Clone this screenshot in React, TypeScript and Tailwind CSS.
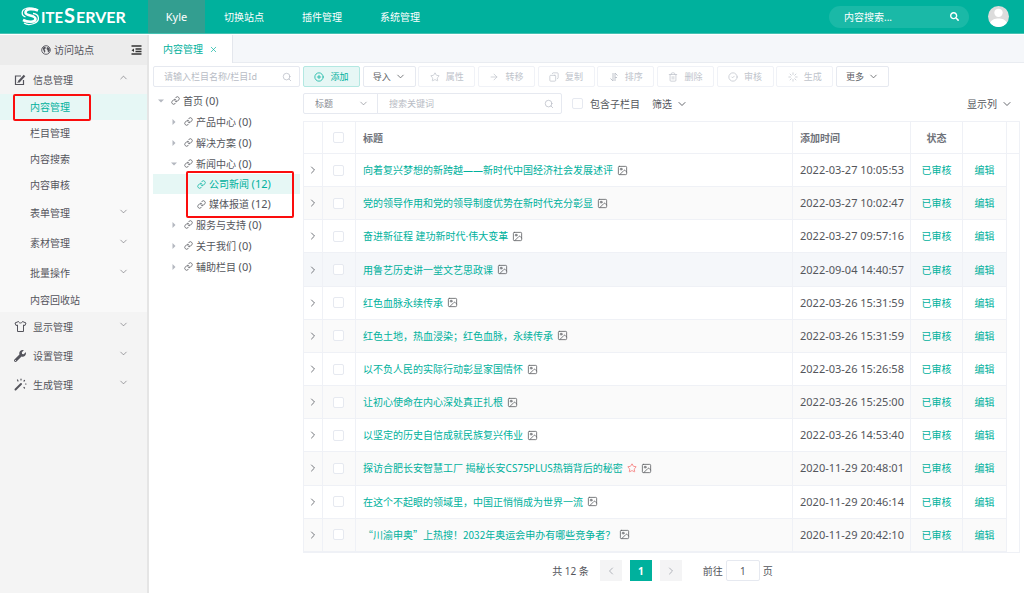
import { useState } from 'react';
import {
  Image,
  ChevronDown,
  ChevronLeft,
  ChevronRight,
  ChevronUp,
  CircleCheck,
  CirclePlus,
  Copy,
  Link,
  ArrowRight,
  Loader,
  Search,
  Star,
  Trash2,
  X,
} from 'lucide-react';
import { FaSearch, FaWrench } from 'react-icons/fa';

const TOP_NAV = ['切换站点', '插件管理', '系统管理'];

const SUB_MENU = ['内容管理', '栏目管理', '内容搜索', '内容审核'];
const SUB_GROUPS = ['表单管理', '素材管理', '批量操作'];

const GROUPS = [
  { name: '显示管理', icon: <ShirtIcon /> },
  { name: '设置管理', icon: <FaWrench size={12} /> },
  { name: '生成管理', icon: <WandIcon /> },
];

const ACTIONS = [
  { name: '属性', icon: <Star size={10} strokeWidth={1.8} /> },
  { name: '转移', icon: <ArrowRight size={10} strokeWidth={1.8} /> },
  { name: '复制', icon: <Copy size={10} strokeWidth={1.8} className="-scale-x-100" /> },
  { name: '排序', icon: <SortIcon /> },
  { name: '删除', icon: <Trash2 size={10} strokeWidth={1.8} /> },
  { name: '审核', icon: <CircleCheck size={10} strokeWidth={1.8} /> },
  { name: '生成', icon: <Loader size={10} strokeWidth={1.8} /> },
];

const CONTENTS = [
  { title: '向着复兴梦想的新跨越——新时代中国经济社会发展述评', date: '2022-03-27 10:05:53' },
  { title: '党的领导作用和党的领导制度优势在新时代充分彰显', date: '2022-03-27 10:02:47' },
  { title: '奋进新征程 建功新时代·伟大变革', date: '2022-03-27 09:57:16' },
  { title: '用鲁艺历史讲一堂文艺思政课', date: '2022-09-04 14:40:57', active: true },
  { title: '红色血脉永续传承', date: '2022-03-26 15:31:59' },
  { title: '红色土地，热血浸染；红色血脉，永续传承', date: '2022-03-26 15:31:59' },
  { title: '以不负人民的实际行动彰显家国情怀', date: '2022-03-26 15:26:58' },
  { title: '让初心使命在内心深处真正扎根', date: '2022-03-26 15:25:00' },
  { title: '以坚定的历史自信成就民族复兴伟业', date: '2022-03-26 14:53:40' },
  { title: '探访合肥长安智慧工厂 揭秘长安CS75PLUS热销背后的秘密', date: '2020-11-29 20:48:01', star: true },
  { title: '在这个不起眼的领域里，中国正悄悄成为世界一流', date: '2020-11-29 20:46:14' },
  { title: '“川渝申奥”上热搜！2032年奥运会申办有哪些竞争者？', date: '2020-11-29 20:42:10', quoted: true },
];

function ShirtIcon() {
  return (
    <svg viewBox="0 0 13 13" className="size-[13px]" fill="none" stroke="currentColor" strokeLinejoin="round">
      <path d="M4.500 1.500L1 3L2 5.500L3.500 5V11.500H9.500V5L11 5.500L12 3L8.500 1.500C8 3.500 5 3.500 4.500 1.500Z" />
    </svg>
  );
}

function WandIcon() {
  return (
    <svg viewBox="0 0 13 13" className="size-[13px]" fill="none" stroke="currentColor" strokeLinecap="round">
      <path d="M1.500 11.500L7 6" strokeWidth="2" />
      <path d="M7 1V2M3.500 2L4 3M10.500 2.500L10 3M11.500 6H12M10 9.500L10.500 10" strokeWidth="1.200" />
    </svg>
  );
}

function EditIcon() {
  return (
    <svg viewBox="0 0 12 12" className="mr-[7px] size-3" fill="none" stroke="currentColor">
      <path d="M7 2H1.500V10.500H9.500V6" strokeWidth="1.200" />
      <path d="M4.500 8L10.500 1.500" strokeWidth="2.200" />
      <path d="M3.500 9L5 7.500" />
    </svg>
  );
}

function SortIcon() {
  return (
    <svg viewBox="0 0 10 10" className="size-[10px]" fill="none" stroke="currentColor">
      <path d="M4 1V9L1.500 6.500M6 9V1L8.500 3.500M6 5.500H8" />
    </svg>
  );
}

function EarthIcon() {
  return (
    <svg viewBox="0 0 10 10" className="size-[10px]">
      <circle cx="5" cy="5" r="4.300" fill="none" stroke="currentColor" strokeWidth="0.900" />
      <path d="M1.500 3L4 1.500L5 3L3.500 4.500L4.500 6L3.500 8L2.500 5.500ZM6 2L8.500 3L8.800 6L7 7.500L6.500 5L5.500 4Z" fill="currentColor" />
    </svg>
  );
}

function Logo() {
  return (
    <a href="#" aria-label="SiteServer" className="flex w-[148px] items-center pl-[21px] text-white">
      <svg viewBox="0 0 110 30" className="h-[30px] w-[110px]" fill="currentColor">
        <path
          d="M17 8.500C12 6.500 4.500 6.500 4.500 10.500C4.500 14.500 14.500 12.500 14.500 17C14.500 20.500 7 20.500 2 18"
          fill="none"
          stroke="currentColor"
          strokeWidth="2.600"
        />
        <path
          d="M4.500 15C0 13.500 0 8 5 6.500C8 5.500 12 6 17 8M12 11.500C18.500 12 19.500 19 13 21.500C9 23 5 22.500 3 21"
          fill="none"
          stroke="currentColor"
          strokeWidth="1.300"
        />
        <g fontFamily="Lato, sans-serif" fontWeight="700">
          <text x="20" y="21" fontSize="15">ITE</text>
          <text x="43" y="21" fontSize="20">S</text>
          <text x="55" y="21" fontSize="16">ERVER</text>
        </g>
      </svg>
    </a>
  );
}

function Header() {
  return (
    <header className="flex h-[34px] shrink-0 items-stretch border-b border-[#46c2b3] bg-[#00b19d] text-white">
      <Logo />
      <nav className="flex">
        <a href="#" className="flex w-[57px] items-center justify-center bg-[#339e90] text-[11px]">Kyle</a>
        {TOP_NAV.map((item) => (
          <a key={item} href="#" className="flex w-[78px] items-center justify-center">{item}</a>
        ))}
      </nav>
      <div className="ml-auto flex items-center gap-[19px] pr-[15px]">
        <label className="flex h-[22px] w-[140px] items-center rounded-full bg-[#1ab9a7] pl-[15px] pr-[10px]">
          <input
            aria-label="内容搜索"
            placeholder="内容搜索..."
            className="min-w-0 flex-1 bg-transparent outline-none placeholder:text-white"
          />
          <FaSearch size={9} />
        </label>
        <svg viewBox="0 0 20 20" className="size-[21px]" role="img" aria-label="Kyle">
          <circle cx="10" cy="10" r="10" fill="#dcdcdc" />
          <circle cx="10" cy="6.500" r="4" fill="#fff" />
          <path d="M2 16C4 10.500 16 10.500 18 16A10 10 0 0 1 2 16Z" fill="#fff" />
        </svg>
      </div>
    </header>
  );
}

function Sidebar() {
  return (
    <aside className="w-[149px] shrink-0 border-r-2 border-[#e5e5e5] bg-[#f4f4f4] text-[#54545c]">
      <div className="flex h-[30px] items-center bg-[#ececec] pl-[41px] pr-[5px]">
        <a href="#" className="flex items-center gap-[3px]"><EarthIcon />访问站点</a>
        <button aria-label="收起菜单" className="ml-auto">
          <svg viewBox="0 0 11 10" className="h-[10px] w-[11px]" stroke="#333" strokeWidth="1.400">
            <path d="M0.500 1H10.500M4.500 4H10.500M4.500 6.500H10.500M0.500 9H10.500" />
            <path d="M0.500 5.200L3 3.500V7Z" fill="#333" stroke="none" />
          </svg>
        </button>
      </div>
      <button className="flex h-[29px] w-full items-center pl-[14px] pr-[18px]">
        <EditIcon />信息管理
        <ChevronUp size={11} strokeWidth={1.2} className="mb-1 ml-auto" />
      </button>
      <div className="bg-[#f9f9f9]">
        {SUB_MENU.map((item, i) => (
          <div key={item} className="relative">
            <a
              href="#"
              className={`flex h-[26px] items-center pl-[30px] ${i === 0 ? 'bg-[#e6f7f5] text-[#00b19d]' : ''}`}
            >
              {item}
            </a>
            {i === 0 && <span className="absolute left-[13px] top-0 h-[27px] w-[78px] rounded-xs border-2 border-[#fb0d0d]" />}
          </div>
        ))}
        {SUB_GROUPS.map((item) => (
          <button key={item} className="flex h-[30px] w-full items-center pl-[30px] pr-[18px]">
            {item}
            <ChevronDown size={11} strokeWidth={1.2} className="mb-1 ml-auto" />
          </button>
        ))}
        <a href="#" className="flex h-6 items-center pl-[30px]">内容回收站</a>
      </div>
      {GROUPS.map((group) => (
        <button key={group.name} className="flex h-[29px] w-full items-center pl-[14px] pr-[18px]">
          <span className="w-[19px]">{group.icon}</span>{group.name}
          <ChevronDown size={11} strokeWidth={1.2} className="mb-1 ml-auto" />
        </button>
      ))}
    </aside>
  );
}

interface TreeNodeProps {
  name: string;
  count: number;
  depth?: number;
  open?: boolean;
  leaf?: boolean;
  active?: boolean;
}

function TreeNode({ name, count, depth = 0, open, leaf, active }: TreeNodeProps) {
  return (
    <button
      className={`flex w-full items-center ${leaf ? 'h-5' : 'h-[21px]'} ${['pl-1', 'pl-[17px]', 'pl-[30px]'][depth]} ${
        active ? 'bg-[#e6f7f5] text-[#00b19d]' : 'text-[#54565c]'
      }`}
    >
      <svg viewBox="0 0 8 8" className="mr-[6px] size-2" fill="#b4b8c0">
        {!leaf && <path d={open ? 'M1 2.500H7L4 5.500Z' : 'M2.500 1L5.500 4L2.500 7Z'} />}
      </svg>
      <Link size={9} strokeWidth={2} className="mr-[3px]" />
      {name}&nbsp;<span className="text-[11px]">({count})</span>
    </button>
  );
}

function ChannelTree() {
  return (
    <div className="w-[147px] shrink-0 pt-[3px]">
      <label className="flex h-[21px] items-center rounded-xs border border-[#e6e9f0] pl-[10px] pr-[7px] text-[#b8bcc5]">
        <input
          aria-label="栏目"
          placeholder="请输入栏目名称/栏目Id"
          className="min-w-0 flex-1 text-[9px] outline-none placeholder:text-[#b8bcc5]"
        />
        <Search size={10} strokeWidth={1.8} />
      </label>
      <div className="mt-[3px]">
        <TreeNode name="首页" count={0} open />
        <TreeNode name="产品中心" count={0} depth={1} />
        <TreeNode name="解决方案" count={0} depth={1} />
        <TreeNode name="新闻中心" count={0} depth={1} open />
        <div className="relative">
          <TreeNode name="公司新闻" count={12} depth={2} leaf active />
          <TreeNode name="媒体报道" count={12} depth={2} leaf />
          <span className="absolute -top-[3px] left-[33px] h-[47px] w-[108px] rounded-xs border-2 border-[#fb0d0d]" />
        </div>
        <TreeNode name="服务与支持" count={0} depth={1} />
        <TreeNode name="关于我们" count={0} depth={1} />
        <TreeNode name="辅助栏目" count={0} depth={1} />
      </div>
    </div>
  );
}

function Toolbar() {
  return (
    <>
      <div className="flex h-[21px] max-w-[586px] justify-between text-[9px] text-[#606266]">
        <button className="flex w-[57px] items-center justify-center gap-[6px] rounded-xs border border-[#b3e8e2] bg-[#e6f7f5] text-[#00b19d]">
          <CirclePlus size={10} strokeWidth={1.8} />添加
        </button>
        <button className="flex w-[53px] items-center justify-center gap-1 rounded-xs border border-[#e6e9f0]">
          导入<ChevronDown size={11} strokeWidth={1.8} />
        </button>
        {ACTIONS.map(({ name, icon }) => (
          <button
            key={name}
            disabled
            className="flex w-[57px] items-center justify-center gap-[6px] rounded-xs border border-[#f0f2f7] text-[#c0c4cc]"
          >
            {icon}{name}
          </button>
        ))}
        <button className="flex w-[53px] items-center justify-center gap-1 rounded-xs border border-[#e6e9f0]">
          更多<ChevronDown size={11} strokeWidth={1.8} />
        </button>
      </div>
      <div className="mt-[6px] flex items-center text-[#54565c]">
        <div className="relative flex h-[21px] w-[75px] items-center rounded-l-xs border border-[#e6e9f0] text-[9px] text-[#85888f]">
          <select aria-label="搜索字段" className="w-full appearance-none bg-transparent pl-[11px] outline-none">
            <option>标题</option>
          </select>
          <ChevronDown size={11} strokeWidth={1.5} className="pointer-events-none absolute right-2" />
        </div>
        <label className="-ml-px flex h-[21px] w-[185px] items-center rounded-r-xs border border-[#e6e9f0] pl-[11px] pr-[7px] text-[#b8bcc5]">
          <input
            aria-label="搜索关键词"
            placeholder="搜索关键词"
            className="min-w-0 flex-1 text-[9px] outline-none placeholder:text-[#b8bcc5]"
          />
          <Search size={10} strokeWidth={1.8} />
        </label>
        <label className="ml-[10px] flex items-center gap-[7px]">
          <Checkbox />包含子栏目
        </label>
        <button className="ml-3 flex items-center gap-1">筛选<ChevronDown size={12} strokeWidth={1.8} /></button>
        <button className="ml-auto mr-[7px] flex items-center gap-1">显示列<ChevronDown size={12} strokeWidth={1.8} /></button>
      </div>
    </>
  );
}

function Checkbox({ label }: { label?: string }) {
  return (
    <input
      type="checkbox"
      aria-label={label}
      className="block size-[11px] appearance-none rounded-xs border border-[#e6e9f0] bg-white checked:bg-[#00b19d]"
    />
  );
}

function ContentTable() {
  return (
    <div className="mt-[7px] min-h-0 flex-1 border border-[#eff1f6]">
      <table className="h-full w-full table-fixed border-separate border-spacing-0 text-left [&_td]:border-r [&_td]:border-b [&_td]:border-[#eff1f6] [&_th]:border-r [&_th]:border-b [&_th]:border-[#eff1f6]">
        <colgroup>
          <col className="w-[19px]" />
          <col className="w-[33px]" />
          <col />
          <col className="w-[118px]" />
          <col className="w-[52px]" />
          <col className="w-[44px]" />
          <col className="w-3" />
        </colgroup>
        <thead>
          <tr className="h-8 text-[#70737a]">
            <th />
            <th className="pl-[10px]"><Checkbox label="全选" /></th>
            <th className="pl-[7px] font-bold">标题</th>
            <th className="pl-[7px] font-bold">添加时间</th>
            <th className="text-center font-bold">状态</th>
            <th />
            <th className="border-r-0!" />
          </tr>
        </thead>
        <tbody>
          {CONTENTS.map((row, i) => (
            <tr key={row.title} className={row.active ? 'bg-[#f5f7fa]' : i % 2 ? 'bg-[#fafafa]' : 'bg-white'}>
              <td>
                <button aria-label="展开" className="mx-auto block"><ChevronRight size={12} strokeWidth={2} color="#73767c" /></button>
              </td>
              <td className="pl-[10px]"><Checkbox label={row.title} /></td>
              <td className="pl-[7px]">
                <div className="flex items-center gap-1 whitespace-nowrap">
                  <a href="#" className={`text-[#00b19d] ${row.quoted ? "font-['Noto_Sans_CJK_SC',sans-serif]" : ''}`}>{row.title}</a>
                  {row.star && <Star size={10} strokeWidth={1.8} color="#f56c6c" />}
                  <Image size={11} strokeWidth={1.8} color="#606266" />
                </div>
              </td>
              <td className="pl-[7px] text-[11px] text-[#54565c]">{row.date}</td>
              <td className="text-center"><a href="#" className="text-[#00b19d]">已审核</a></td>
              <td className="text-center"><a href="#" className="text-[#00b19d]">编辑</a></td>
              <td className="border-b-0! border-r-0! bg-white" />
            </tr>
          ))}
        </tbody>
      </table>
    </div>
  );
}

function Pagination() {
  const [page, setPage] = useState('1');

  return (
    <div className="flex h-10 shrink-0 items-center justify-center pb-[5px] pl-[2px] text-[#54565c]">
      <span>共 12 条</span>
      <button aria-label="上一页" className="ml-[11px] flex h-[21px] w-[22px] items-center justify-center bg-[#f4f4f5] text-[#b0b3ba]">
        <ChevronLeft size={12} />
      </button>
      <button className="ml-2 h-[21px] w-[22px] bg-[#00b19d] font-bold text-white">1</button>
      <button aria-label="下一页" className="ml-2 flex h-[21px] w-[22px] items-center justify-center bg-[#f4f4f5] text-[#b0b3ba]">
        <ChevronRight size={12} />
      </button>
      <label className="ml-[21px] flex items-center gap-[3px]">
        前往
        <input
          value={page}
          onChange={(e) => setPage(e.target.value)}
          className="h-[21px] w-[34px] rounded-xs border border-[#e6e9f0] text-center outline-none"
        />
        页
      </label>
    </div>
  );
}

export default function App() {
  return (
    <div className="flex h-screen flex-col bg-white font-['Noto_Sans','Noto_Sans_CJK_SC',sans-serif] text-[10px] leading-4">
      <Header />
      <div className="flex min-h-0 flex-1 pt-px">
        <Sidebar />
        <main className="flex min-w-0 flex-1 flex-col">
          <div className="flex h-7 shrink-0 border-b border-[#e9ecf1] bg-[#f5f7fa]">
            <div className="-mb-px flex items-center gap-[6px] border-r border-[#e4e7ed] bg-white px-[14px] text-[#00b19d]">
              内容管理
              <button aria-label="关闭"><X size={9} strokeWidth={1.8} /></button>
            </div>
          </div>
          <div className="flex min-h-0 flex-1 gap-[3px] pl-1 pr-1">
            <ChannelTree />
            <section className="flex min-w-0 flex-1 flex-col pt-[3px]">
              <Toolbar />
              <ContentTable />
              <Pagination />
            </section>
          </div>
        </main>
      </div>
    </div>
  );
}
